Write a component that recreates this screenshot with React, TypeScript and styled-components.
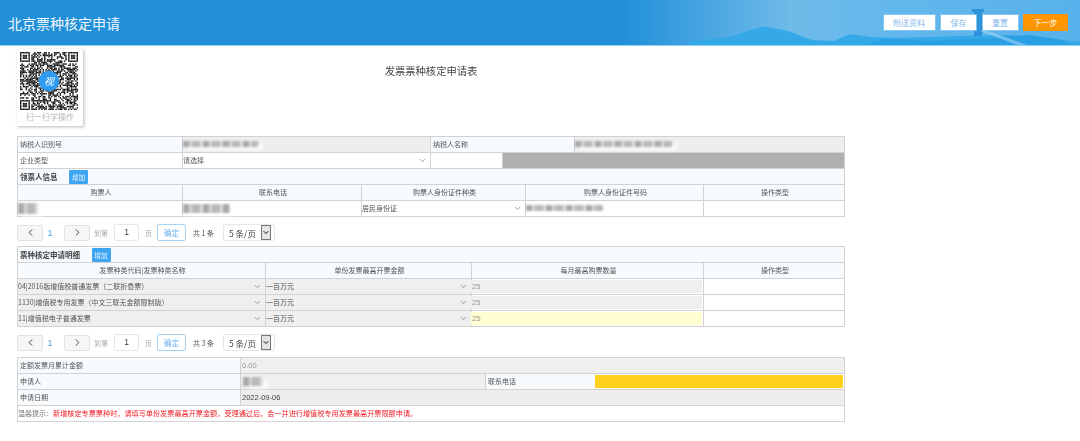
import React from 'react';
import styled, { createGlobalStyle } from 'styled-components';
import { ChevronDown, ChevronLeft, ChevronRight } from 'lucide-react';

const GlobalStyle = createGlobalStyle`
  html, body { margin: 0; padding: 0; background: #fff; }
  body {
    font-family: "Noto Sans CJK SC", "Liberation Sans", sans-serif;
    font-size: 7px;
    color: #555;
  }
`;

const Header = styled.header`
  position: relative;
  height: 46px;
  box-sizing: border-box;
  display: flex;
  align-items: center;
  justify-content: space-between;
  padding: 0 12px 0 8px;
  background: linear-gradient(90deg, #2290d9 0, #2290d9 625px, #6fbbe9 790px, #62b7ec 900px, #58b1ea 1080px);
  border-bottom: 1px solid #8ed0f6;
  overflow: hidden;
`;

const HeaderArt = styled.svg`
  position: absolute;
  left: 0;
  top: 0;
`;

const AppTitle = styled.h1`
  position: relative;
  margin: 0;
  font-size: 14px;
  font-weight: 400;
  color: #fff;
  opacity: 0.95;
`;

const HeaderButtons = styled.div`
  position: relative;
  display: flex;
  gap: 4.5px;
`;

const HeaderButton = styled.button<{ $primary?: boolean; $w: number }>`
  width: ${p => p.$w}px;
  height: 17.5px;
  padding: 0;
  font: inherit;
  font-size: 8px;
  border: 1px solid ${p => (p.$primary ? '#ff9500' : '#85c6f0')};
  background: ${p => (p.$primary ? '#ff9500' : '#fff')};
  color: ${p => (p.$primary ? '#fff' : '#86b9ec')};
`;

const Page = styled.main`
  width: 828px;
  margin-left: 17px;
  filter: blur(0.25px);
`;

const TopRow = styled.div`
  display: grid;
  grid-template-columns: 66px 1fr 66px;
  height: 90px;
  padding-top: 3px;
  box-sizing: border-box;
`;

const QrCard = styled.div`
  width: 66px;
  height: 77px;
  padding: 3px 3px 0;
  box-sizing: border-box;
  background: #fff;
  box-shadow: 1px 1px 3px rgba(0, 0, 0, 0.28);
  text-align: center;
`;

const QrCaption = styled.div`
  margin-top: 2px;
  font-size: 8px;
  line-height: 10px;
  color: #b5b5b5;
`;

const FormTitle = styled.h2`
  margin: 15px 0 0;
  font-size: 10.3px;
  line-height: 14px;
  font-weight: 400;
  text-align: center;
  color: #444;
`;

const Panel = styled.section`
  border-top: 1px solid #d2d2d2;
  border-left: 1px solid #d2d2d2;
`;

const Row = styled.div<{ $cols: string }>`
  display: grid;
  grid-template-columns: ${p => p.$cols};
  height: 16px;
`;

const tones: Record<string, string> = {
  plain: '#fff',
  label: '#f7fbfd',
  readonly: '#f0eded',
  muted: '#efefef',
  dark: '#b0b0b0',
};

const Cell = styled.div<{ $tone?: string; $center?: boolean; $tight?: boolean }>`
  display: flex;
  align-items: center;
  justify-content: ${p => (p.$center ? 'center' : 'flex-start')};
  box-sizing: border-box;
  min-width: 0;
  padding-left: ${p => (p.$tight ? '0' : '2px')};
  padding-bottom: 1px;
  background: ${p => tones[p.$tone || 'plain']};
  border-right: 1px solid #d2d2d2;
  border-bottom: 1px solid #d2d2d2;
  white-space: nowrap;
`;

const SectionRow = styled(Cell)`
  background: #f7fbfd;
  height: 16px;
  padding-bottom: 0;
  gap: 11.5px;
  font-size: 7.5px;
  font-weight: 700;
  color: #444;
`;

const AddButton = styled.button`
  width: 19px;
  height: 14px;
  padding: 0;
  font: inherit;
  font-size: 6.5px;
  font-weight: 400;
  color: #e6f3fe;
  background: #3ea5f3;
  border: 0;
  border-radius: 1px;
`;

const SelectBox = styled.div`
  flex: 1;
  display: flex;
  align-items: center;
  justify-content: space-between;
  padding-right: 3px;
  color: #555;
  svg { color: #555; }
`;

const FieldFill = styled.div<{ $color: string }>`
  flex: 1;
  align-self: stretch;
  margin: 1px 1px 0 -1px;
  padding-left: 1px;
  display: flex;
  align-items: center;
  font-family: "Liberation Sans", sans-serif;
  font-size: 7.5px;
  background: ${p => p.$color};
  color: #999;
`;

const NumberText = styled.span<{ $dark?: boolean }>`
  margin-left: 1px;
  font-family: "Liberation Sans", sans-serif;
  font-size: 7.5px;
  color: ${p => (p.$dark ? '#444' : '#999')};
`;

const Redacted = styled.span<{ $w: number; $h?: number }>`
  display: block;
  width: ${p => p.$w}px;
  height: ${p => p.$h || 6}px;
  background: repeating-linear-gradient(90deg, #a9a9a9 0 6px, #d4d4d4 6px 9px, #b8b8b8 9px 17px, #dcdcdc 17px 20px);
  filter: blur(1.1px);
  box-shadow: 5px 3px 3px rgba(255, 255, 255, 0.7);
`;

const Pager = styled.nav<{ $gapAfter: number }>`
  display: flex;
  align-items: center;
  height: 17px;
  margin: 7px 0 ${p => p.$gapAfter}px;
  font-size: 7px;
  color: #aaa;
`;

const PageArrow = styled.button`
  display: flex;
  align-items: center;
  justify-content: center;
  width: 26px;
  height: 16px;
  padding: 0;
  background: #f6f6f6;
  border: 1px solid #e2e2e2;
  border-radius: 2px;
  color: #333;
`;

const PageNumber = styled.span`
  width: 21px;
  padding-right: 7px;
  box-sizing: border-box;
  text-align: center;
  font-family: "Liberation Sans", sans-serif;
  font-size: 9px;
  color: #4fa6ee;
`;

const PageLabel = styled.span`
  margin-left: 4px;
`;

const PageInput = styled.div`
  width: 25px;
  height: 17px;
  margin: 0 6px;
  box-sizing: border-box;
  border: 1px solid #e6e6e6;
  border-radius: 2px;
  font-family: "Liberation Sans", sans-serif;
  font-size: 8.5px;
  line-height: 15px;
  text-align: center;
  color: #444;
`;

const ConfirmButton = styled.button`
  width: 29px;
  height: 17px;
  margin: 0 7px 0 5px;
  padding: 0;
  font: inherit;
  font-size: 7.5px;
  color: #69b1f0;
  background: #fff;
  border: 1px solid #a5d2f7;
  border-radius: 2px;
`;

const PageTotal = styled.span`
  width: 30px;
  color: #555;
`;

const PageSize = styled.div`
  display: flex;
  align-items: center;
  justify-content: space-between;
  width: 52px;
  height: 17px;
  padding: 0 3px 0 5px;
  box-sizing: border-box;
  border: 1px solid #e6e6e6;
  border-radius: 2px;
  font-size: 8.5px;
  color: #444;
`;

const SizeArrow = styled.span`
  display: flex;
  align-items: center;
  justify-content: center;
  width: 10px;
  height: 15px;
  background: #e4e4e4;
  border: 1px solid #777;
  box-sizing: border-box;
  color: #111;
`;

const Hint = styled(Cell)`
  height: 16px;
  padding-left: 0;
  color: #777;
`;

const HintText = styled.span`
  font-size: 7.15px;
  color: #f0202a;
`;

// modules of the QR code: finder squares plus seeded noise
const QR_SIZE = 41;
const finder = (x: number, y: number, ox: number, oy: number) => {
  const dx = x - ox;
  const dy = y - oy;
  if (dx < -1 || dy < -1 || dx > 7 || dy > 7) return null;
  if (dx < 0 || dy < 0 || dx > 6 || dy > 6) return false;
  if (dx === 0 || dy === 0 || dx === 6 || dy === 6) return true;
  return dx >= 2 && dx <= 4 && dy >= 2 && dy <= 4;
};

const qrModules = () => {
  const cells: [number, number][] = [];
  let seed = 4711;
  for (let y = 0; y < QR_SIZE; y++) {
    for (let x = 0; x < QR_SIZE; x++) {
      seed = (seed * 1103515245 + 12345) & 0x7fffffff;
      const fixed =
        finder(x, y, 0, 0) ?? finder(x, y, QR_SIZE - 7, 0) ?? finder(x, y, 0, QR_SIZE - 7);
      const on = fixed === null ? (seed >> 16) % 100 < 56 : fixed;
      if (on) cells.push([x, y]);
    }
  }
  return cells;
};

const QrCode = () => (
  <svg width="58" height="58" viewBox={`0 0 ${QR_SIZE} ${QR_SIZE}`} style={{ display: 'block' }}>
    {qrModules().map(([x, y]) => (
      <rect key={`${x}-${y}`} x={x} y={y} width="1" height="1" fill="#111" />
    ))}
    <circle cx="20.5" cy="20.5" r="7.2" fill="#2f9bf0" />
    <text x="20.5" y="23" textAnchor="middle" fontSize="7" fontStyle="italic" fill="#fff">
      视
    </text>
  </svg>
);

const Sel = ({ children }: { children: React.ReactNode }) => (
  <SelectBox>
    <span>{children}</span>
    <ChevronDown size={9} strokeWidth={1.5} />
  </SelectBox>
);

const Pagination = ({ total, gapAfter }: { total: number; gapAfter: number }) => (
  <Pager $gapAfter={gapAfter}>
    <PageArrow>
      <ChevronLeft size={11} strokeWidth={2} />
    </PageArrow>
    <PageNumber>1</PageNumber>
    <PageArrow>
      <ChevronRight size={11} strokeWidth={2} />
    </PageArrow>
    <PageLabel>到第</PageLabel>
    <PageInput>1</PageInput>
    <span>页</span>
    <ConfirmButton>确定</ConfirmButton>
    <PageTotal>共 {total} 条</PageTotal>
    <PageSize>
      5 条/页
      <SizeArrow>
        <ChevronDown size={9} strokeWidth={3} />
      </SizeArrow>
    </PageSize>
  </Pager>
);

const TAXPAYER = '165px 248px 144px 1fr';
const TYPE_ROW = '165px 248px 72px 1fr';
const BUYERS = '165px 179px 164px 178px 1fr';
const DETAIL = '248px 206px 232px 1fr';
const FOOT = '223px 1fr';
const FOOT_APPLICANT = '223px 245px 110px 1fr';

const details = [
  { name: '04|2016版增值税普通发票（二联折叠票）', fill: '#efefef' },
  { name: '1130|增值税专用发票（中文三联无金额限制版）', fill: '#efefef' },
  { name: '11|增值税电子普通发票', fill: '#ffffd2' },
];

export default function App() {
  return (
    <>
      <GlobalStyle />
      <Header>
        <HeaderArt width="1080" height="46" viewBox="0 0 1080 46">
          <path d="M688 46 L692 41 L730 37 L750 30 L764 26.5 L788 31 L812 40 L833 41 L850 34 L871 37 L900 38 L960 36 L1010 35 L1050 38 L1080 42 V46 Z" fill="#35a9e8" />
          <path d="M860 46 L885 39 L930 41 L990 38 L1030 35 L1060 40 L1076 46 Z" fill="#2a9fe4" />
          <path d="M972 9 H984 V12 H982 V36 H974 V12 H972 Z" fill="#2f93dc" />
          <path d="M980 31 L988 31 L1030 46 H1020 Z" fill="#9ed4f3" opacity="0.6" />
        </HeaderArt>
        <AppTitle>北京票种核定申请</AppTitle>
        <HeaderButtons>
          <HeaderButton $w={53}>附送资料</HeaderButton>
          <HeaderButton $w={37}>保存</HeaderButton>
          <HeaderButton $w={37}>重置</HeaderButton>
          <HeaderButton $w={45} $primary>下一步</HeaderButton>
        </HeaderButtons>
      </Header>
      <Page>
        <TopRow>
          <QrCard>
            <QrCode />
            <QrCaption>扫一扫学操作</QrCaption>
          </QrCard>
          <FormTitle>发票票种核定申请表</FormTitle>
        </TopRow>

        <Panel>
          <Row $cols={TAXPAYER}>
            <Cell $tone="label">纳税人识别号</Cell>
            <Cell $tone="readonly" $tight><Redacted $w={75} /></Cell>
            <Cell $tone="label">纳税人名称</Cell>
            <Cell $tone="readonly" $tight><Redacted $w={97} /></Cell>
          </Row>
          <Row $cols={TYPE_ROW}>
            <Cell>企业类型</Cell>
            <Cell $tight><Sel>请选择</Sel></Cell>
            <Cell />
            <Cell $tone="dark" />
          </Row>
          <SectionRow>
            领票人信息
            <AddButton>增加</AddButton>
          </SectionRow>
          <Row $cols={BUYERS}>
            <Cell $tone="label" $center>购票人</Cell>
            <Cell $tone="label" $center>联系电话</Cell>
            <Cell $tone="label" $center>购票人身份证件种类</Cell>
            <Cell $tone="label" $center>购票人身份证件号码</Cell>
            <Cell $tone="label" $center>操作类型</Cell>
          </Row>
          <Row $cols={BUYERS}>
            <Cell $tight><Redacted $w={20} $h={11} /></Cell>
            <Cell $tight><Redacted $w={47} $h={9} /></Cell>
            <Cell $tight><Sel>居民身份证</Sel></Cell>
            <Cell $tight><Redacted $w={77} /></Cell>
            <Cell />
          </Row>
        </Panel>

        <Pagination total={1} gapAfter={5} />

        <Panel>
          <SectionRow>
            票种核定申请明细
            <AddButton>增加</AddButton>
          </SectionRow>
          <Row $cols={DETAIL}>
            <Cell $tone="label" $center>发票种类代码|发票种类名称</Cell>
            <Cell $tone="label" $center>单份发票最高开票金额</Cell>
            <Cell $tone="label" $center>每月最高购票数量</Cell>
            <Cell $tone="label" $center>操作类型</Cell>
          </Row>
          {details.map(d => (
            <Row $cols={DETAIL} key={d.name}>
              <Cell $tone="muted" $tight><Sel>{d.name}</Sel></Cell>
              <Cell $tone="muted" $tight><Sel>一百万元</Sel></Cell>
              <Cell $tight><FieldFill $color={d.fill}>25</FieldFill></Cell>
              <Cell />
            </Row>
          ))}
        </Panel>

        <Pagination total={3} gapAfter={6} />

        <Panel>
          <Row $cols={FOOT}>
            <Cell $tone="label">定额发票月累计金额</Cell>
            <Cell $tone="muted" $tight><NumberText>0.00</NumberText></Cell>
          </Row>
          <Row $cols={FOOT_APPLICANT}>
            <Cell $tone="label">申请人</Cell>
            <Cell $tone="muted"><Redacted $w={20} $h={9} /></Cell>
            <Cell $tone="label">联系电话</Cell>
            <Cell $tight><FieldFill $color="#ffd11c" /></Cell>
          </Row>
          <Row $cols={FOOT}>
            <Cell $tone="label">申请日期</Cell>
            <Cell $tone="readonly" $tight><NumberText $dark>2022-09-06</NumberText></Cell>
          </Row>
          <Hint>
            温馨提示：
            <HintText>新增核定专票票种时，请填写单份发票最高开票金额，受理通过后，会一并进行增值税专用发票最高开票限额申请。</HintText>
          </Hint>
        </Panel>
      </Page>
    </>
  );
}
